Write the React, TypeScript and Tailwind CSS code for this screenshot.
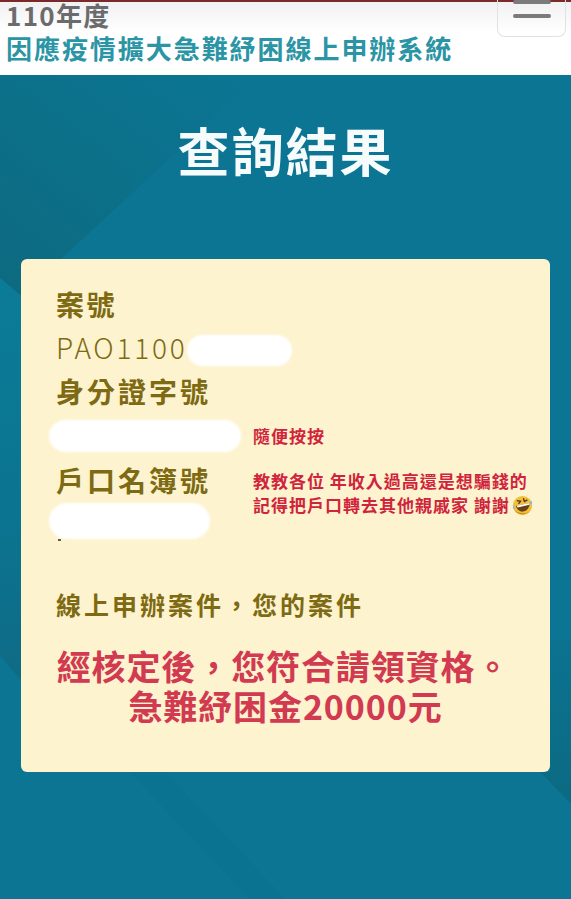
const cjk = "font-['Noto_Sans_CJK_TC','Noto_Sans',sans-serif]";

function RoflEmoji() {
  return (
    <svg viewBox="0 0 24 24" className="ml-[2px] h-[21px] w-[21px] shrink-0">
      <circle cx="12" cy="12" r="11" fill="#f2bf3a" />
      <path d="M3 17 A11 11 0 0 0 20 19 C14 22 8 21 3 17 Z" fill="#c98a24" />
      <path d="M4.5 12.5 L20 9 C20.5 14.5 16.5 19 11.5 19 C8 19 5.5 16 4.5 12.5 Z" fill="#6b3f12" />
      <path d="M5.5 12.3 L19.8 9.1 L19.9 11 L6.3 14.3 Z" fill="#fff" />
      <path d="M5.5 6.5 L9.8 7.2 L7.4 10.2" fill="none" stroke="#4f3410" strokeWidth="1.5" />
      <path d="M13 3.8 L14.2 7.4 L17.6 5.6" fill="none" stroke="#4f3410" strokeWidth="1.5" />
      <path d="M21.5 6 C23.5 8 23.5 10.5 22 11 C20.5 11.2 20.2 8.5 21.5 6 Z" fill="#7cc0ea" />
      <path d="M1.8 12 C0.4 14 0.8 16 2.4 16 C3.8 15.8 3.4 13.6 1.8 12 Z" fill="#7cc0ea" />
    </svg>
  );
}

function Blob({ className }: { className: string }) {
  return <div className={`rounded-full bg-white blur-[1px] ${className}`} />;
}

export default function App() {
  return (
    <div className={`relative h-[899px] w-[571px] overflow-hidden bg-[#0b7593] ${cjk}`}>
      <svg viewBox="0 0 571 899" className="absolute inset-0 h-full w-full">
        <defs>
          <linearGradient id="top" x1="0.9" y1="0" x2="0" y2="1">
            <stop offset="0" stopColor="#0b7593" />
            <stop offset="0.5" stopColor="#0c7089" />
            <stop offset="1" stopColor="#0d6a80" />
          </linearGradient>
          <linearGradient id="left" x1="0" y1="0" x2="0" y2="1">
            <stop offset="0" stopColor="#0b7c98" />
            <stop offset="0.6" stopColor="#0b7490" />
            <stop offset="1" stopColor="#0f6b86" />
          </linearGradient>
          <linearGradient id="right" x1="0" y1="0" x2="0" y2="1">
            <stop offset="0" stopColor="#0b7290" />
            <stop offset="1" stopColor="#0c6a82" />
          </linearGradient>
        </defs>
        <polygon points="0,75 260,75 60,260 21,296 0,278" fill="url(#top)" />
        <polygon points="0,278 21,296 21,680 0,656" fill="url(#left)" />
        <polygon points="550,640 571,640 571,804 540,772 550,772" fill="url(#right)" />
        <polygon points="130,772 165,772 285,899 250,899" fill="#0b7090" opacity="0.4" />
      </svg>

      <div className="relative flex h-[75px] flex-col border-t-2 border-[#7a2a2a] bg-gradient-to-b from-[#f1f1f1] to-white to-40%">
        <div className="pl-[6px] text-[26px] leading-[26px] font-bold tracking-[1.3px] text-[#6b6b6d]">110年度</div>
        <div className="mt-[3px] pl-[6px] text-[26px] leading-[34px] font-bold tracking-[1.95px] whitespace-nowrap text-[#2b95a5]">
          因應疫情擴大急難紓困線上申辦系統
        </div>
        <div className="absolute -top-[2px] right-[5px] flex h-[37px] w-[69px] flex-col items-center gap-[10px] rounded-b-lg border border-t-0 border-[#e2e2e2]">
          <div className="h-[4px] w-[38px] rounded-sm bg-[#7b7b7b]" />
          <div className="h-[4px] w-[38px] rounded-sm bg-[#7b7b7b]" />
        </div>
      </div>

      <h1 className="relative mt-[39px] text-center text-[52px] leading-[72px] font-bold tracking-[2px] text-[#f6fbfb]">查詢結果</h1>

      <div className="relative mx-[21px] mt-[73px] h-[513px] rounded-md bg-[#fdf3cf] pt-[25px] pl-[35px] text-[#7d6a12]">
        <div className="text-[28px] leading-[40px] font-bold tracking-[2.5px]">案號</div>
        <div className="mt-[3px] flex items-center text-[28px] leading-[40px] font-light tracking-[2.8px]">
          PAO1100
          <Blob className="mt-[6px] -ml-[1px] h-[31px] w-[105px]" />
        </div>
        <div className="mt-[4px] text-[28px] leading-[40px] font-bold tracking-[3px]">身分證字號</div>
        <div className="mt-[9px] flex items-center gap-[12px]">
          <Blob className="-ml-[7px] h-[32px] w-[192px]" />
          <span className="text-[17px] leading-[24px] font-semibold tracking-[1px] text-[#d0243c]">隨便按按</span>
        </div>
        <div className="mt-[8px] flex">
          <div className="w-[197px]">
            <div className="text-[28px] leading-[40px] font-bold tracking-[3px]">戶口名簿號</div>
            <Blob className="mt-[3px] -ml-[7px] h-[36px] w-[161px]" />
            <div className="ml-[2px] h-[2px] w-[3px] bg-[#5a5a4a]" />
          </div>
          <div className="mt-[9px] text-[17px] leading-[24px] font-semibold whitespace-nowrap text-[#d0243c]">
            <div className="tracking-[1px]">教教各位 年收入過高還是想騙錢的</div>
            <div className="flex items-center tracking-[1px]">
              記得把戶口轉去其他親戚家 謝謝
              <RoflEmoji />
            </div>
          </div>
        </div>
        <div className="mt-[45px] text-[25px] leading-[36px] font-bold tracking-[3px]">線上申辦案件，您的案件</div>
        <div className="mt-[24px] -ml-[35px] text-center text-[34px] leading-[40px] font-bold tracking-[0.9px] text-[#d13a51]">
          <div className="pr-[4px]">經核定後，您符合請領資格。</div>
          <div>急難紓困金20000元</div>
        </div>
      </div>
    </div>
  );
}
